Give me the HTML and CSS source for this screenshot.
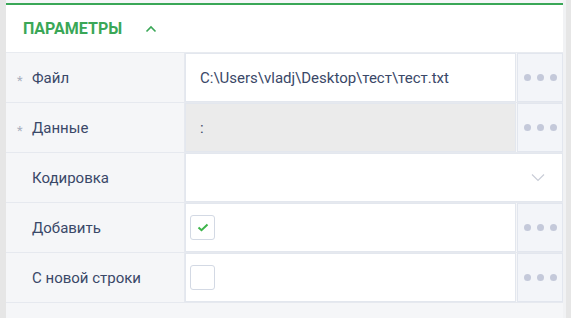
FILE: index.html
```html
<!DOCTYPE html>
<html lang="ru">
<head>
    <meta charset="UTF-8">
    <title>Параметры</title>
    <link rel="stylesheet" href="styles.css">
</head>
<body>
    <div class="panel">
        <div class="section-head">
            <span class="section-title">Параметры</span>
            <svg class="collapse" width="12" height="8" viewBox="0 0 12 8">
                <path d="M1.5 6.5 L6 2 L10.5 6.5" fill="none" stroke="#3aa757" stroke-width="1.6"/>
            </svg>
        </div>

        <div class="prop-row">
            <div class="prop-label"><span class="req">*</span>Файл</div>
            <div class="prop-value">C:\Users\vladj\Desktop\тест\тест.txt</div>
            <div class="prop-btn"><span class="dot"></span><span class="dot"></span><span class="dot"></span></div>
        </div>
        <div class="prop-row">
            <div class="prop-label"><span class="req">*</span>Данные</div>
            <div class="prop-value disabled">:</div>
            <div class="prop-btn"><span class="dot"></span><span class="dot"></span><span class="dot"></span></div>
        </div>
        <div class="prop-row">
            <div class="prop-label"><span class="req"></span>Кодировка</div>
            <div class="prop-value select">
                <svg width="14" height="9" viewBox="0 0 14 9">
                    <path d="M1 1.5 L7 7.5 L13 1.5" fill="none" stroke="#c9cdd7" stroke-width="1.2"/>
                </svg>
            </div>
        </div>
        <div class="prop-row">
            <div class="prop-label"><span class="req"></span>Добавить</div>
            <div class="prop-value check">
                <span class="checkbox">
                    <svg width="12" height="9" viewBox="0 0 12 9">
                        <path d="M1.5 4.5 L4.5 7.2 L10.5 1.5" fill="none" stroke="#3db54a" stroke-width="2"/>
                    </svg>
                </span>
            </div>
            <div class="prop-btn"><span class="dot"></span><span class="dot"></span><span class="dot"></span></div>
        </div>
        <div class="prop-row">
            <div class="prop-label"><span class="req"></span>С новой строки</div>
            <div class="prop-value check">
                <span class="checkbox"></span>
            </div>
            <div class="prop-btn"><span class="dot"></span><span class="dot"></span><span class="dot"></span></div>
        </div>
    </div>
</body>
</html>
```

FILE: styles.css
```css
body {
    margin: 0;
    height: 318px;
    overflow: hidden;
    background-color: #e6e6e6;
    font-family: Roboto, "Liberation Sans", sans-serif;
    font-size: 15px;
    color: #3a4868;
}
.panel {
    margin-left: 6px;
    width: 557px;
    height: 315px;
    padding-top: 3px;
    background: #f5f6f8;
    border-right: 3px solid #f1f2f4;
}
.section-head {
    display: flex;
    align-items: center;
    height: 47px;
    padding-left: 17px;
    background: white;
    border-top: 2px solid #3aa757;
    border-bottom: 1px solid #e8ebf0;
}
.section-title {
    font-size: 16px;
    font-weight: 700;
    text-transform: uppercase;
    color: #3aa757;
}
.collapse {
    margin-left: 23px;
}
.prop-row {
    display: flex;
    height: 50px;
    box-sizing: border-box;
    border-bottom: 1px solid #e6e9ef;
}
.prop-label {
    display: flex;
    align-items: center;
    box-sizing: border-box;
    width: 179px;
    padding-left: 11px;
    border-right: 1px solid #e6e9ef;
}
.req {
    width: 15px;
    padding-top: 6px;
    font-size: 13px;
    color: #a9b0bf;
}
.prop-value {
    flex: 1;
    display: flex;
    align-items: center;
    padding-left: 14px;
    background: white;
    border: 1px solid #e3e7ee;
}
.prop-value.disabled {
    background: #ebebeb;
}
.prop-value.select {
    justify-content: flex-end;
    padding-right: 17px;
}
.prop-value.check {
    padding-left: 4px;
}
.checkbox {
    display: flex;
    align-items: center;
    justify-content: center;
    width: 23px;
    height: 23px;
    border: 1px solid #d3d9e4;
    border-radius: 3px;
    background: white;
}
.prop-btn {
    display: flex;
    align-items: center;
    justify-content: center;
    gap: 6px;
    width: 44px;
    margin-left: 1px;
    background: #f3f5f9;
    border: 1px solid #e2e6ee;
}
.dot {
    width: 7px;
    height: 7px;
    border-radius: 50%;
    background: #c4c9da;
}
```
